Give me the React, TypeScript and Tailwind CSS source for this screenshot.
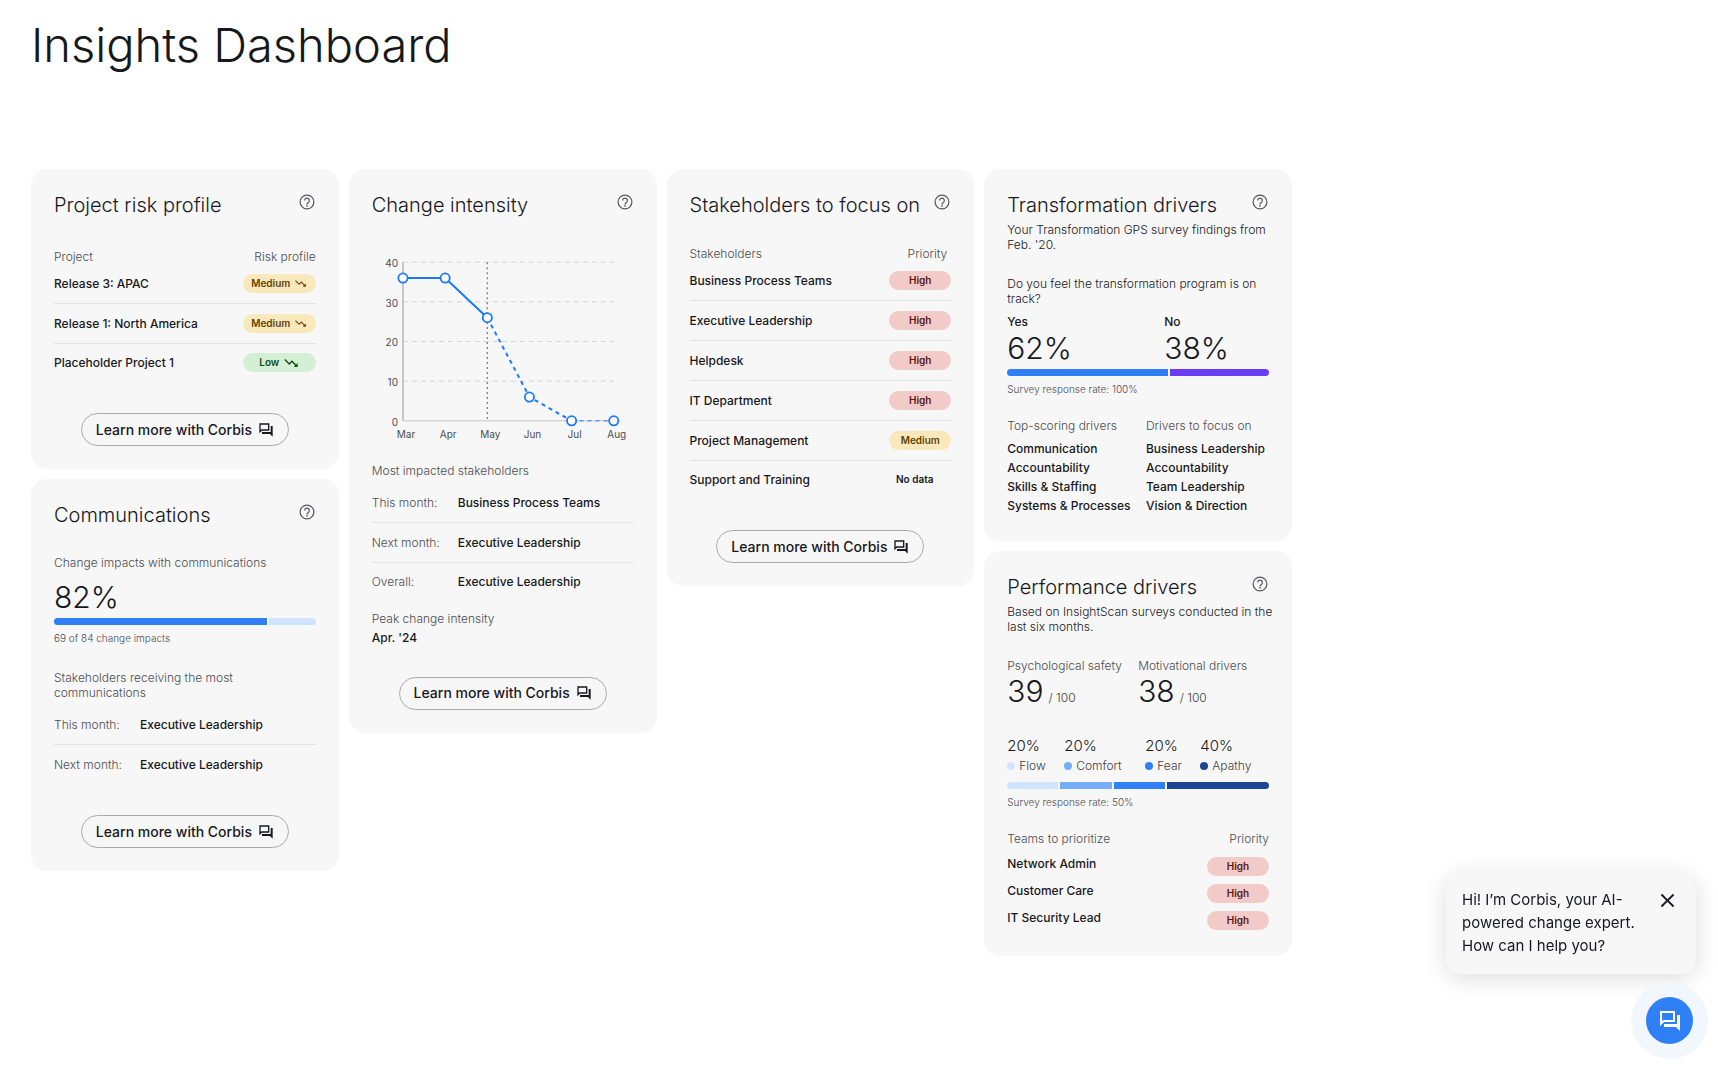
import { useState } from "react"
import type { ReactNode } from "react"
import { MdClose, MdTrendingDown } from "react-icons/md"

type Level = "High" | "Medium" | "Low" | "No data"

const PILL_COLORS: Record<Level, string> = {
  High: "bg-[#f2cbc8] text-[#5c1512]",
  Medium: "bg-[#fae8bd] text-[#5f4200]",
  Low: "bg-[#d3f0d4] text-[#0f4a17]",
  "No data": "pr-[11px] text-[#17181c]",
}

const PROJECTS: { name: string; risk: Level }[] = [
  { name: "Release 3: APAC", risk: "Medium" },
  { name: "Release 1: North America", risk: "Medium" },
  { name: "Placeholder Project 1", risk: "Low" },
]

const STAKEHOLDERS: { name: string; priority: Level }[] = [
  { name: "Business Process Teams", priority: "High" },
  { name: "Executive Leadership", priority: "High" },
  { name: "Helpdesk", priority: "High" },
  { name: "IT Department", priority: "High" },
  { name: "Project Management", priority: "Medium" },
  { name: "Support and Training", priority: "No data" },
]

const INTENSITY = [
  { month: "Mar", value: 36 },
  { month: "Apr", value: 36 },
  { month: "May", value: 26 },
  { month: "Jun", value: 6 },
  { month: "Jul", value: 0 },
  { month: "Aug", value: 0 },
]

const MOTIVATORS = [
  { name: "Flow", value: 20, color: "bg-[#d1e4fd]" },
  { name: "Comfort", value: 20, color: "bg-[#76aef8]" },
  { name: "Fear", value: 20, color: "bg-[#2f80f7]" },
  { name: "Apathy", value: 40, color: "bg-[#1b4693]" },
]

const TEAMS = ["Network Admin", "Customer Care", "IT Security Lead"]

const ForumIcon = ({ className }: { className?: string }) => (
  <svg viewBox="0 0 24 24" fill="currentColor" className={className} aria-hidden="true">
    <path d="M15 4v7H5.17L4 12.17V4h11m2-2H2v15l4-4h11V2zm5 4h-3v9H6v3h12l4 4V6z" />
  </svg>
)

const HelpIcon = ({ className }: { className?: string }) => (
  <svg viewBox="0 0 24 24" fill="none" stroke="currentColor" strokeWidth="1.6" className={className} aria-hidden="true">
    <circle cx="12" cy="12" r="9.2" />
    <path d="M8.9 10a3.1 3.1 0 1 1 5.4 2.1c-1.2 1.2-2.3 1.6-2.3 3.1" />
    <circle cx="12" cy="17.2" r="1.1" fill="currentColor" stroke="none" />
  </svg>
)

const Pill = ({ level, trend }: { level: Level; trend?: boolean }) => (
  <span
    className={`inline-flex h-[19px] items-center justify-center rounded-full text-[10px] font-semibold ${
      trend ? "w-[73px] gap-1" : "w-[62px]"
    } ${PILL_COLORS[level]}`}
  >
    {level}
    {trend && <MdTrendingDown className={level === "Low" ? "size-4" : "size-[13px]"} />}
  </span>
)

const Card = ({ title, subtitle, children }: { title: string; subtitle?: string[]; children: ReactNode }) => (
  <section className="rounded-2xl bg-[#f7f7f7] px-[23px] pt-6 pb-[23px]">
    <div className="flex items-start justify-between">
      <h2 className="text-xl leading-6 font-light whitespace-nowrap text-[#17181c]">{title}</h2>
      <button type="button" aria-label={`About ${title}`} className="text-[#55565a]">
        <HelpIcon className="size-[18px]" />
      </button>
    </div>
    {subtitle && (
      <p className="mt-[5px] font-light whitespace-nowrap text-[#17181c]">
        {subtitle[0]}
        <br />
        {subtitle[1]}
      </p>
    )}
    {children}
  </section>
)

const LearnMore = () => (
  <div className="mt-8 flex justify-center">
    <button
      type="button"
      className="flex h-[33px] items-center gap-[6px] rounded-full border border-[#a9aaad] px-[14px] text-sm font-medium whitespace-nowrap text-[#17181c]"
    >
      Learn more with Corbis
      <ForumIcon className="size-4" />
    </button>
  </div>
)

const LevelTable = ({
  heading,
  levelHeading,
  rows,
  trend,
}: {
  heading: string
  levelHeading: string
  rows: { name: string; level: Level }[]
  trend?: boolean
}) => (
  <table className={`w-full border-separate border-spacing-0 ${trend ? "mt-8" : "mt-[29px]"}`}>
    <thead className="text-[#4b4c50]">
      <tr>
        <th className="p-0 text-left font-light">{heading}</th>
        <th className={`p-0 text-right font-light ${trend ? "" : "pr-1"}`}>{levelHeading}</th>
      </tr>
    </thead>
    <tbody>
      {rows.map((row, i) => {
        const cell = i < rows.length - 1 ? "h-10 border-b border-[#e4e4e5] p-0" : "h-[37px] p-0"
        return (
          <tr key={row.name}>
            <td className={`${cell} font-medium`}>{row.name}</td>
            <td className={cell}>
              <div className="flex justify-end">
                <Pill level={row.level} trend={trend} />
              </div>
            </td>
          </tr>
        )
      })}
    </tbody>
  </table>
)

const MonthList = ({ rows }: { rows: [string, string][] }) => (
  <dl className="mt-[5px]">
    {rows.map(([label, value], i) => (
      <div
        key={label}
        className={`flex items-center ${i < rows.length - 1 ? "h-10 border-b border-[#e4e4e5]" : "h-[38px]"}`}
      >
        <dt className="w-[86px] font-light text-[#4b4c50]">{label}</dt>
        <dd className="font-medium">{value}</dd>
      </div>
    ))}
  </dl>
)

const SplitBar = ({ parts }: { parts: { value: number; color: string }[] }) => (
  <div className="flex h-[7px] gap-[2px] overflow-hidden rounded-full">
    {parts.map((part, i) => (
      <div key={i} className={part.color} style={{ flexGrow: part.value }} />
    ))}
  </div>
)

const IntensityChart = () => {
  const x = (i: number) => 31 + i * 42.2
  const y = (value: number) => 182 - value * 3.97
  const points = INTENSITY.map((d, i) => `${x(i)},${y(d.value)}`)

  return (
    <svg viewBox="0 0 262 206" className="mt-[22px] w-full" role="img" aria-label="Change intensity by month">
      {[10, 20, 30, 40].map((tick) => (
        <line key={tick} x1={x(0)} x2={x(5)} y1={y(tick)} y2={y(tick)} stroke="#d4d4d6" strokeDasharray="5 4" />
      ))}
      <line x1={x(0)} x2={x(0)} y1={y(40)} y2={y(0)} stroke="#97989b" />
      <line x1={x(0)} x2={x(5)} y1={y(0)} y2={y(0)} stroke="#c4c5c7" />
      <polyline points={points.slice(0, 3).join(" ")} fill="none" stroke="#1a78fa" strokeWidth="2" />
      <polyline points={points.slice(2, 5).join(" ")} fill="none" stroke="#1a78fa" strokeWidth="2" strokeDasharray="4 4" />
      <polyline points={points.slice(4).join(" ")} fill="none" stroke="#1a78fa" strokeDasharray="4 4" />
      {/* Today marker */}
      <line x1={x(2)} x2={x(2)} y1={y(40)} y2={y(0)} stroke="#85868a" strokeWidth="1.4" strokeDasharray="2 3" />
      {INTENSITY.map((d, i) => (
        <circle key={d.month} cx={x(i)} cy={y(d.value)} r="4.6" fill="#fff" stroke="#1a78fa" strokeWidth="1.8" />
      ))}
      <g fill="#4b4c50" fontSize="10">
        {[0, 10, 20, 30, 40].map((tick) => (
          <text key={tick} x="26" y={y(tick) + 5} textAnchor="end">
            {tick}
          </text>
        ))}
        {INTENSITY.map((d, i) => (
          <text key={d.month} x={x(i) + 3} y="199" textAnchor="middle">
            {d.month}
          </text>
        ))}
      </g>
    </svg>
  )
}

const Score = ({ label, value }: { label: string; value: number }) => (
  <div>
    <p className="font-light text-[#4b4c50]">{label}</p>
    <p className="mt-[2px] flex items-baseline gap-[5px]">
      <span className="text-[30px] leading-8 font-light">{value}</span>
      <span className="font-light text-[#3d3e43]">/ 100</span>
    </p>
  </div>
)

const DriverList = ({ heading, items }: { heading: string; items: string[] }) => (
  <div>
    <h3 className="font-light text-[#4b4c50]">{heading}</h3>
    <ul className="mt-[6px] leading-[19px] font-medium whitespace-nowrap">
      {items.map((item) => (
        <li key={item}>{item}</li>
      ))}
    </ul>
  </div>
)

const CorbisChat = () => {
  const [isOpen, setIsOpen] = useState(true)

  return (
    <div className="fixed right-[10px] bottom-[21px] flex flex-col items-end gap-2">
      {isOpen && (
        <div className="mr-3 flex w-[250px] items-start justify-between rounded-2xl bg-[#f7f7f7] pt-[15px] pr-[17px] pb-[17px] pl-4 shadow-[0_4px_24px_rgba(0,0,0,0.14)]">
          <p className="text-[15px] leading-[23px] whitespace-nowrap">
            Hi! I’m Corbis, your AI-
            <br />
            powered change expert.
            <br />
            How can I help you?
          </p>
          <button type="button" aria-label="Close" className="pt-px" onClick={() => setIsOpen(false)}>
            <MdClose className="size-[23px]" />
          </button>
        </div>
      )}
      <div className="rounded-full bg-[#f2f7fe] p-[15px]">
        <button
          type="button"
          aria-label="Chat with Corbis"
          onClick={() => setIsOpen(!isOpen)}
          className="flex size-[47px] items-center justify-center rounded-full bg-[#2f80f7] text-white"
        >
          <ForumIcon className="size-6" />
        </button>
      </div>
    </div>
  )
}

export default function App() {
  return (
    <div className="min-h-screen bg-white font-['Inter',sans-serif] text-xs leading-[15px] text-[#17181c]">
      <main className="px-[31px] pt-[17px] pb-10">
        <h1 className="text-[47px] leading-14 font-light">Insights Dashboard</h1>

        <div className="mt-24 grid max-w-[1261px] grid-cols-4 items-start gap-[10px]">
          <div className="flex flex-col gap-[10px]">
            <Card title="Project risk profile">
              <LevelTable
                heading="Project"
                levelHeading="Risk profile"
                rows={PROJECTS.map((p) => ({ name: p.name, level: p.risk }))}
                trend
              />
              <LearnMore />
            </Card>

            <Card title="Communications">
              <p className="mt-7 font-light text-[#4b4c50]">Change impacts with communications</p>
              <p className="mt-[11px] mb-[5px] text-[30px] leading-8 font-light">82%</p>
              <SplitBar
                parts={[
                  { value: 82, color: "bg-[#2f80f7]" },
                  { value: 18, color: "bg-[#d1e4fd]" },
                ]}
              />
              <p className="mt-[6px] text-[10px] font-light text-[#4b4c50]">69 of 84 change impacts</p>
              <p className="mt-6 font-light text-[#4b4c50]">
                Stakeholders receiving the most
                <br />
                communications
              </p>
              <MonthList
                rows={[
                  ["This month:", "Executive Leadership"],
                  ["Next month:", "Executive Leadership"],
                ]}
              />
              <LearnMore />
            </Card>
          </div>

          <Card title="Change intensity">
            <IntensityChart />
            <p className="mt-[18px] font-light text-[#4b4c50]">Most impacted stakeholders</p>
            <MonthList
              rows={[
                ["This month:", "Business Process Teams"],
                ["Next month:", "Executive Leadership"],
                ["Overall:", "Executive Leadership"],
              ]}
            />
            <p className="mt-[10px] font-light text-[#4b4c50]">Peak change intensity</p>
            <p className="mt-1 font-medium">Apr. '24</p>
            <LearnMore />
          </Card>

          <Card title="Stakeholders to focus on">
            <LevelTable
              heading="Stakeholders"
              levelHeading="Priority"
              rows={STAKEHOLDERS.map((s) => ({ name: s.name, level: s.priority }))}
            />
            <LearnMore />
          </Card>

          <div className="flex flex-col gap-[10px]">
            <Card
              title="Transformation drivers"
              subtitle={["Your Transformation GPS survey findings from", "Feb. '20."]}
            >
              <p className="mt-6 font-light">Do you feel the transformation program is on track?</p>
              <div className="mt-2 grid grid-cols-[60%_40%]">
                <div>
                  <p className="font-medium">Yes</p>
                  <p className="mt-[3px] mb-[5px] text-[30px] leading-8 font-light">62%</p>
                </div>
                <div>
                  <p className="font-medium">No</p>
                  <p className="mt-[3px] mb-[5px] text-[30px] leading-8 font-light">38%</p>
                </div>
              </div>
              <SplitBar
                parts={[
                  { value: 62, color: "bg-[#2f80f7]" },
                  { value: 38, color: "bg-[#6b3df5]" },
                ]}
              />
              <p className="mt-[6px] text-[10px] font-light text-[#4b4c50]">Survey response rate: 100%</p>
              <div className="mt-[21px] mb-[3px] grid grid-cols-[53%_47%]">
                <DriverList
                  heading="Top-scoring drivers"
                  items={["Communication", "Accountability", "Skills & Staffing", "Systems & Processes"]}
                />
                <DriverList
                  heading="Drivers to focus on"
                  items={["Business Leadership", "Accountability", "Team Leadership", "Vision & Direction"]}
                />
              </div>
            </Card>

            <Card
              title="Performance drivers"
              subtitle={["Based on InsightScan surveys conducted in the", "last six months."]}
            >
              <div className="mt-6 grid grid-cols-2">
                <Score label="Psychological safety" value={39} />
                <Score label="Motivational drivers" value={38} />
              </div>
              <ul className="mt-[29px] mb-[9px] grid grid-cols-[57px_81px_55px_1fr]">
                {MOTIVATORS.map((m) => (
                  <li key={m.name}>
                    <p className="text-[15px] leading-5 font-light">{m.value}%</p>
                    <p className="mt-[2px] flex items-center gap-1 font-light text-[#3d3e43]">
                      <span className={`size-2 rounded-full ${m.color}`} />
                      {m.name}
                    </p>
                  </li>
                ))}
              </ul>
              <SplitBar parts={MOTIVATORS} />
              <p className="mt-[6px] text-[10px] font-light text-[#4b4c50]">Survey response rate: 50%</p>
              <div className="mt-[21px] mb-[3px]">
                <table className="w-full border-separate border-spacing-0">
                  <thead className="text-[#4b4c50]">
                    <tr>
                      <th className="p-0 pb-[10px] text-left font-light">Teams to prioritize</th>
                      <th className="p-0 pb-[10px] text-right font-light">Priority</th>
                    </tr>
                  </thead>
                  <tbody>
                    {TEAMS.map((team, i) => {
                      const cell = i < TEAMS.length - 1 ? "p-0 pb-[7px] align-top" : "p-0 align-top"
                      return (
                        <tr key={team}>
                          <td className={`${cell} font-medium`}>{team}</td>
                          <td className={cell}>
                            <div className="flex justify-end pt-px">
                              <Pill level="High" />
                            </div>
                          </td>
                        </tr>
                      )
                    })}
                  </tbody>
                </table>
              </div>
            </Card>
          </div>
        </div>
      </main>

      <CorbisChat />
    </div>
  )
}
